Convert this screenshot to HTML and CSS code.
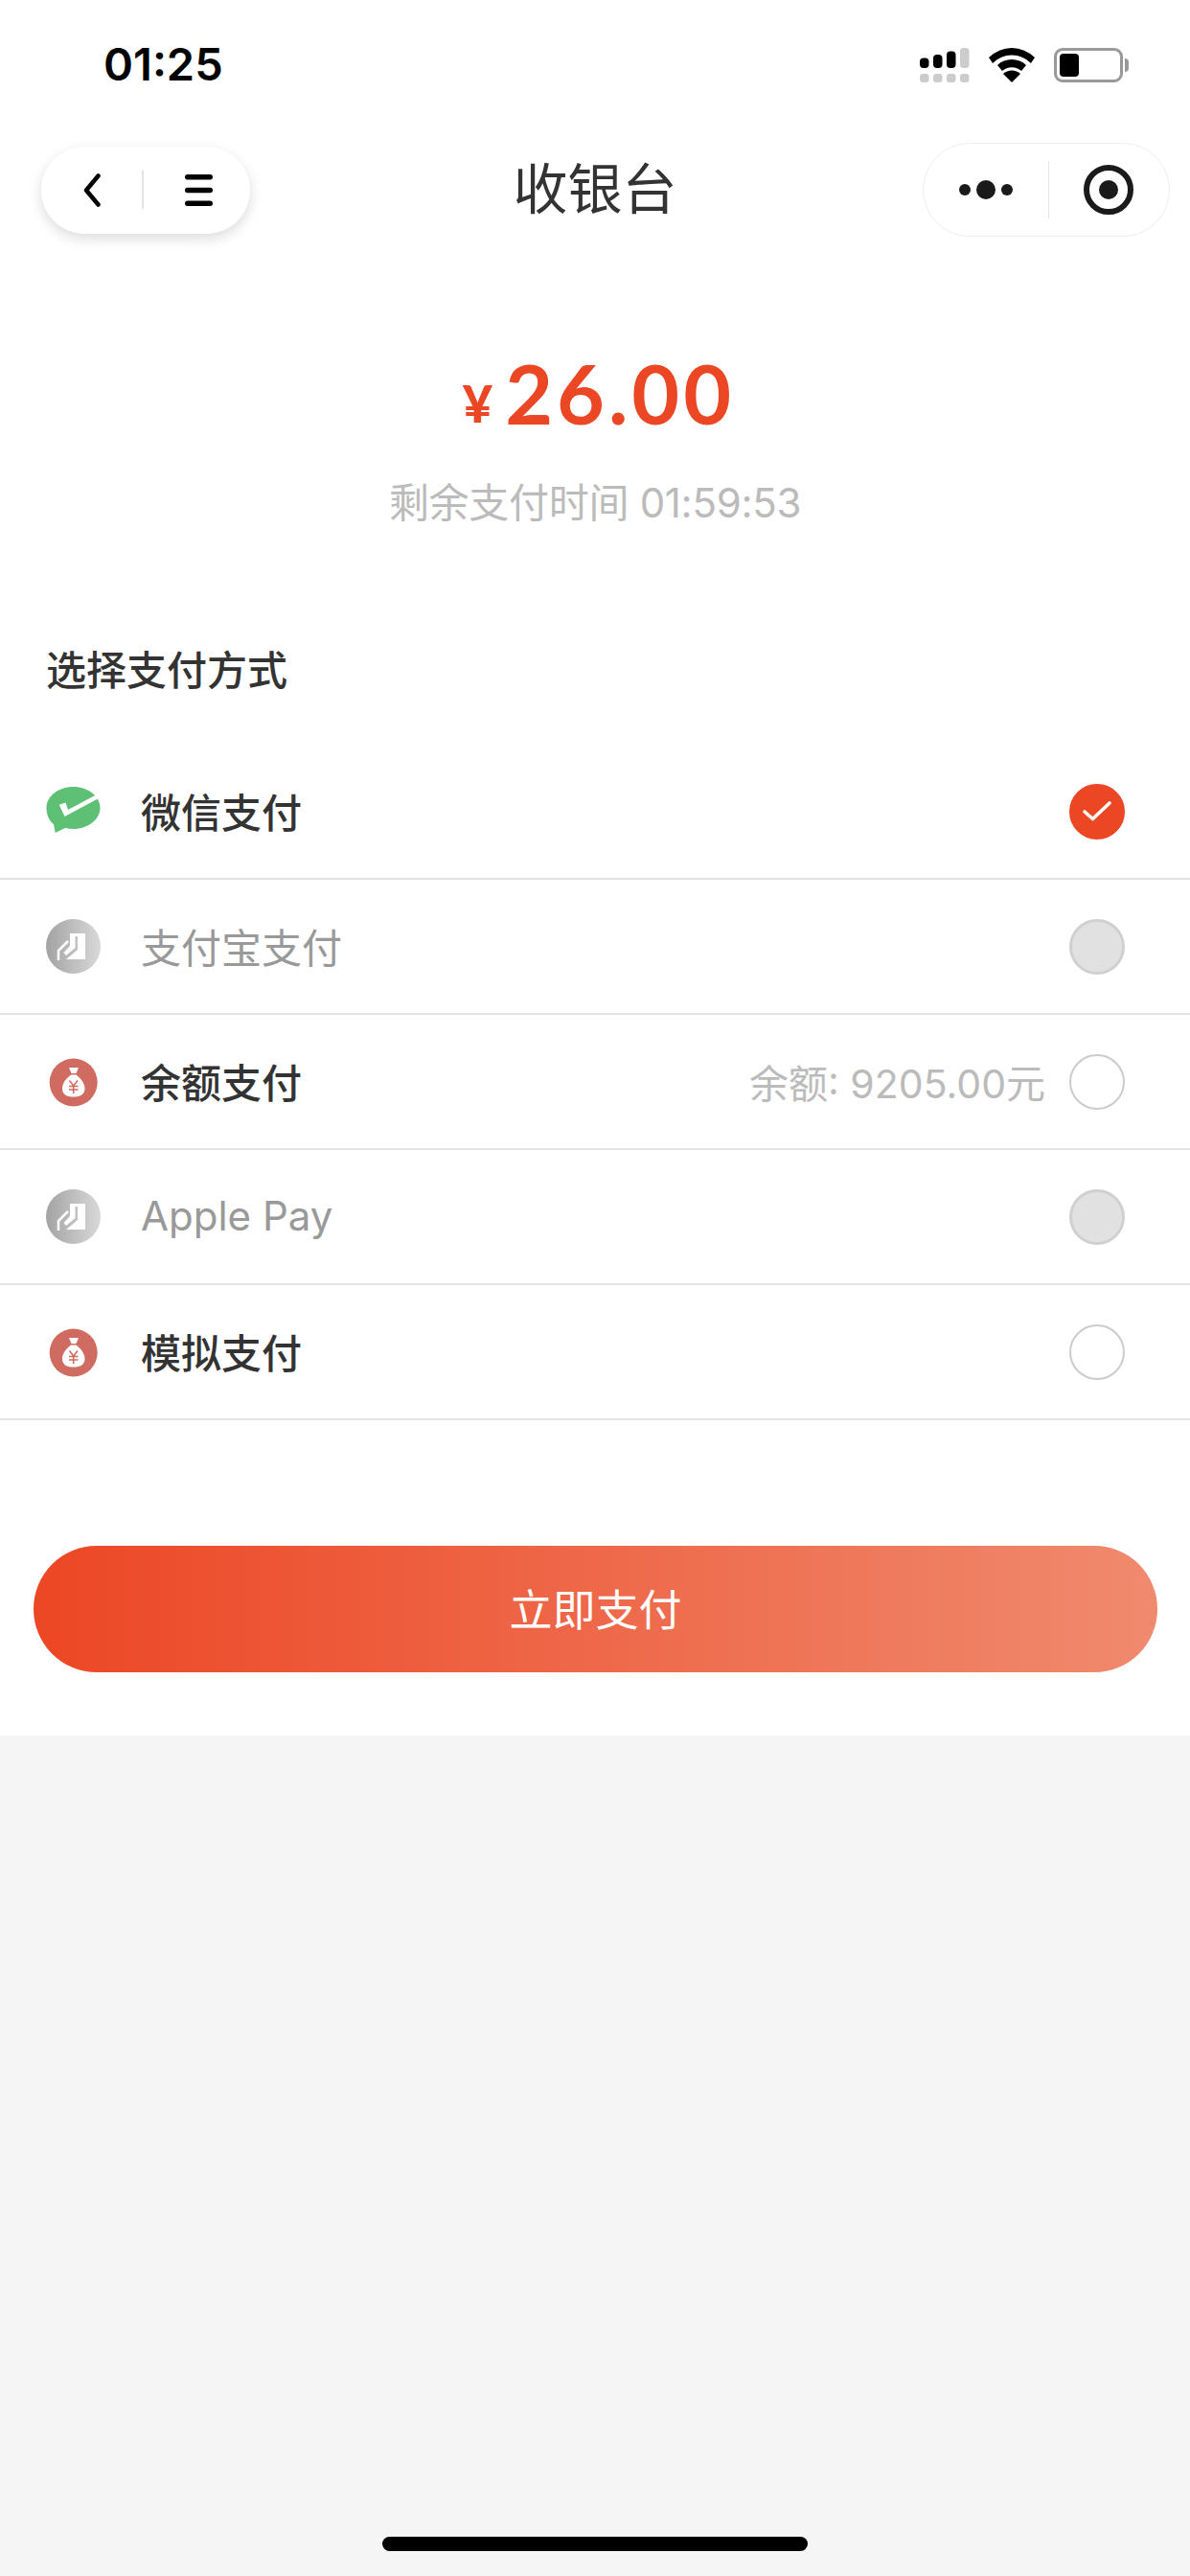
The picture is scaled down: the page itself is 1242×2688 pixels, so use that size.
FILE: index.html
```html
<!DOCTYPE html>
<html lang="zh-CN">
<head>
  <meta charset="UTF-8">
  <meta name="viewport" content="width=device-width, initial-scale=1.0">
  <title>收银台</title>
  <link rel="stylesheet" href="styles.css">
</head>
<body>
  <div class="sheet">
    <div class="status-bar">
      <span class="status-time">01:25</span>
      <div class="status-icons">
        <svg width="52" height="36" viewBox="0 0 52 36">
          <rect x="0" y="10.500" width="9.500" height="10.500" rx="4" fill="#000"/>
          <rect x="14" y="7" width="9.500" height="14" rx="4" fill="#000"/>
          <rect x="28" y="3.500" width="9.500" height="17.500" rx="4" fill="#000"/>
          <rect x="42" y="0" width="9.500" height="21" rx="3.500" fill="#ccc"/>
          <rect x="0" y="27" width="9.500" height="9" rx="3" fill="#ccc"/>
          <rect x="14" y="27" width="9.500" height="9" rx="3" fill="#ccc"/>
          <rect x="28" y="27" width="9.500" height="9" rx="3" fill="#ccc"/>
          <rect x="42" y="27" width="9.500" height="9" rx="3" fill="#ccc"/>
        </svg>
        <svg width="48" height="36" viewBox="0 0 48 36">
          <path d="M0 10 A34 34 0 0 1 48 10 L44 16 A28 28 0 0 0 4 16 Z" fill="#000"/>
          <path d="M9 18 A22 22 0 0 1 39 18 L34 24 A15 15 0 0 0 14 24 Z" fill="#000"/>
          <path d="M24 36 L15 27 A13 13 0 0 1 33 27 Z" fill="#000"/>
        </svg>
        <div class="battery">
          <div class="battery-body"><div class="battery-level"></div></div>
          <div class="battery-tip"></div>
        </div>
      </div>
    </div>

    <div class="nav-bar">
      <div class="nav-pill">
        <svg width="18" height="35" viewBox="0 0 18 35" fill="none" stroke="#000" stroke-width="4.500" stroke-linecap="round" stroke-linejoin="round">
          <path d="M15.500 2.500 L3 17.500 L15.500 32.500"/>
        </svg>
        <span class="pill-line"></span>
        <svg width="29" height="33" viewBox="0 0 29 33" fill="#000">
          <rect y="0" width="29" height="5.500" rx="2.700"/>
          <rect y="13.700" width="29" height="5.500" rx="2.700"/>
          <rect y="27.500" width="29" height="5.500" rx="2.700"/>
        </svg>
      </div>
      <div class="nav-title">收银台</div>
      <div class="capsule">
        <svg width="56" height="24" viewBox="0 0 56 24" fill="#1a1a1a">
          <circle cx="6" cy="12" r="6"/>
          <circle cx="28" cy="12" r="10"/>
          <circle cx="50" cy="12" r="6"/>
        </svg>
        <span class="capsule-line"></span>
        <svg width="52" height="52" viewBox="0 0 52 52">
          <circle cx="26" cy="26" r="23" fill="none" stroke="#1a1a1a" stroke-width="6"/>
          <circle cx="26" cy="26" r="10" fill="#1a1a1a"/>
        </svg>
      </div>
    </div>

    <section class="amount-box">
      <div class="amount"><span class="amount-unit">¥</span><span class="amount-num">26.00</span></div>
      <div class="amount-time">剩余支付时间 01:59:53</div>
    </section>

    <h2 class="pay-title">选择支付方式</h2>

    <ul class="pay-list">
      <li class="pay-item">
        <svg class="pay-icon" viewBox="0 0 57 57">
          <path d="M28.500 3 C44 3 56.500 12.800 56.500 25 C56.500 37 44 47 28.500 47 C25.500 47 22.800 46.600 20 46 L9.700 51 L8 42 C3 38 0.500 32 0.500 25 C0.500 12.800 13 3 28.500 3 Z" fill="#5dc074"/>
          <path d="M13.700 21.700 L20.500 19.500 L23 27 L52 11.500 L55 15 L19.500 34 Z" fill="#fff"/>
        </svg>
        <span class="pay-name">微信支付</span>
        <span class="radio radio-on">
          <svg width="32" height="24" viewBox="0 0 32 24" fill="none" stroke="#fff" stroke-width="3.600" stroke-linecap="round" stroke-linejoin="round">
            <path d="M3 12 L11.500 19.500 L29 3"/>
          </svg>
        </span>
      </li>
      <li class="pay-item is-disabled">
        <svg class="pay-icon" viewBox="0 0 57 57">
          <defs>
            <linearGradient id="greyFill" x1="0" y1="0" x2="1" y2="0">
              <stop offset="0" stop-color="#a3a3a3"/>
              <stop offset="1" stop-color="#d9d9d9"/>
            </linearGradient>
          </defs>
          <circle cx="28.500" cy="28.500" r="28.500" fill="url(#greyFill)"/>
          <path d="M25 15 H41 V42 H21 L33 32 V18 H30.500 V30 L21 38 L18.500 35 L25 28 Z" fill="#fff"/>
          <path d="M13 43 V33 L23 23" fill="none" stroke="#fff" stroke-width="2.500"/>
        </svg>
        <span class="pay-name">支付宝支付</span>
        <span class="radio radio-off"></span>
      </li>
      <li class="pay-item">
        <svg class="pay-icon" viewBox="0 0 57 57">
          <circle cx="28.700" cy="29.500" r="25" fill="#cf6b60"/>
          <path d="M24 14 H34 L31.500 20 H26.500 Z M26 21.500 H31.500 C36 25 40.500 30 40.500 36 C40.500 42 36 44.500 28.700 44.500 C21.500 44.500 17 42 17 36 C17 30 21.500 25 26 21.500 Z" fill="#fff"/>
          <path d="M24.500 27.500 L28.700 33 L33 27.500 M24 33.500 H33.500 M24 37 H33.500 M28.700 33 V41" fill="none" stroke="#cf6b60" stroke-width="1.600"/>
        </svg>
        <span class="pay-name">余额支付</span>
        <span class="pay-note">余额: 9205.00元</span>
        <span class="radio"></span>
      </li>
      <li class="pay-item is-disabled">
        <svg class="pay-icon" viewBox="0 0 57 57">
          <circle cx="28.500" cy="28.500" r="28.500" fill="url(#greyFill)"/>
          <path d="M25 15 H41 V42 H21 L33 32 V18 H30.500 V30 L21 38 L18.500 35 L25 28 Z" fill="#fff"/>
          <path d="M13 43 V33 L23 23" fill="none" stroke="#fff" stroke-width="2.500"/>
        </svg>
        <span class="pay-name">Apple Pay</span>
        <span class="radio radio-off"></span>
      </li>
      <li class="pay-item">
        <svg class="pay-icon" viewBox="0 0 57 57">
          <circle cx="28.700" cy="29.500" r="25" fill="#cf6b60"/>
          <path d="M24 14 H34 L31.500 20 H26.500 Z M26 21.500 H31.500 C36 25 40.500 30 40.500 36 C40.500 42 36 44.500 28.700 44.500 C21.500 44.500 17 42 17 36 C17 30 21.500 25 26 21.500 Z" fill="#fff"/>
          <path d="M24.500 27.500 L28.700 33 L33 27.500 M24 33.500 H33.500 M24 37 H33.500 M28.700 33 V41" fill="none" stroke="#cf6b60" stroke-width="1.600"/>
        </svg>
        <span class="pay-name">模拟支付</span>
        <span class="radio"></span>
      </li>
    </ul>

    <div class="pay-action">
      <button class="pay-btn" type="button">立即支付</button>
    </div>
  </div>

  <div class="home-bar"></div>
</body>
</html>
```

FILE: styles.css
```css
* {
  box-sizing: border-box;
  margin: 0;
  padding: 0;
}

html,
body {
  height: 100%;
}

body {
  display: flex;
  flex-direction: column;
  background-color: #f5f5f5;
  color: #333;
  font-family: Inter, "Noto Sans CJK SC", sans-serif;
}

.sheet {
  background-color: #fff;
  height: 1811px;
}

/* 状态栏 */
.status-bar {
  height: 149px;
  padding: 48px 64px 0 108px;
  display: flex;
  justify-content: space-between;
  align-items: flex-start;
}

.status-time {
  font-size: 47px;
  line-height: 38px;
  font-weight: 600;
  color: #000;
}

.status-icons {
  display: flex;
  align-items: flex-start;
  gap: 20px;
  padding-top: 2px;
}

.battery {
  display: flex;
  align-items: center;
  height: 36px;
}

.battery-body {
  width: 72px;
  height: 36px;
  padding: 3px;
  border: 3px solid #999;
  border-radius: 9px;
}

.battery-level {
  width: 20px;
  height: 100%;
  background-color: #000;
  border-radius: 4px;
}

.battery-tip {
  width: 4px;
  height: 14px;
  margin-left: 2px;
  background-color: #999;
  border-radius: 0 7px 7px 0;
}

/* 导航栏 */
.nav-bar {
  height: 98px;
  padding: 0 21px 0 43px;
  display: grid;
  grid-template-columns: 1fr auto 1fr;
  align-items: center;
}

.nav-pill {
  justify-self: start;
  width: 218px;
  height: 91px;
  padding: 0 39px 0 44px;
  display: flex;
  align-items: center;
  justify-content: space-between;
  background-color: #fff;
  border-radius: 46px;
  box-shadow: 0 5px 14px rgba(0, 0, 0, 0.14);
}

.pill-line {
  width: 2px;
  height: 40px;
  background-color: #e3e3e3;
}

.nav-title {
  font-size: 57px;
  line-height: 98px;
  color: #333;
  transform: translateX(-11px);
}

.capsule {
  justify-self: end;
  width: 258px;
  height: 98px;
  padding: 0 37px 0 37px;
  display: flex;
  align-items: center;
  justify-content: space-between;
  border: 1px solid #eee;
  border-radius: 49px;
}

.capsule-line {
  width: 1px;
  height: 60px;
  background-color: #e5e5e5;
}

/* 金额 */
.amount-box {
  padding-top: 107px;
  text-align: center;
}

.amount {
  display: flex;
  justify-content: center;
  align-items: baseline;
  gap: 13px;
  height: 112px;
  padding-left: 8px;
  color: #ec4725;
  font-family: Lato, "Noto Sans CJK SC", sans-serif;
  font-weight: 700;
}

.amount-unit {
  font-size: 54px;
  font-weight: 900;
  transform: translateY(-2px);
}

.amount-num {
  font-size: 86px;
  line-height: 112px;
  letter-spacing: 4px;
}

.amount-time {
  margin-top: 29px;
  font-size: 42px;
  line-height: 60px;
  letter-spacing: -0.3px;
  color: #bbb;
}

/* 支付方式 */
.pay-title {
  margin-top: 115px;
  padding-left: 48px;
  font-size: 42px;
  line-height: 60px;
  font-weight: 500;
  color: #333;
}

.pay-list {
  margin-top: 47px;
  list-style: none;
}

.pay-item {
  height: 141px;
  padding: 0 68px 0 48px;
  display: flex;
  align-items: center;
  border-bottom: 2px solid #e3e3e3;
}

.pay-icon {
  width: 57px;
  height: 57px;
  flex-shrink: 0;
  margin-right: 42px;
}

.pay-name {
  padding-bottom: 2px;
  font-size: 42px;
  font-weight: 500;
  color: #333;
}

.is-disabled .pay-name {
  color: #999;
  font-weight: 400;
}

.pay-note {
  margin-left: auto;
  padding-bottom: 2px;
  font-size: 41px;
  color: #bbb;
}

.radio {
  width: 58px;
  height: 58px;
  margin-left: 25px;
  flex-shrink: 0;
  border: 2px solid #ccc;
  border-radius: 50%;
  display: flex;
  align-items: center;
  justify-content: center;
}

.pay-name + .radio {
  margin-left: auto;
}

.radio-on {
  background-color: #ec4725;
  border-color: #ec4725;
}

.radio-off {
  background-color: #e1e1e1;
  border: 3px solid #d0d0d0;
}

/* 按钮 */
.pay-action {
  padding: 131px 34px 0 35px;
}

.pay-btn {
  display: block;
  width: 100%;
  height: 132px;
  padding-bottom: 3px;
  border: none;
  border-radius: 66px;
  background: linear-gradient(90deg, #ec4725, #f08a6e);
  color: #fff;
  font-family: inherit;
  font-size: 45px;
}

.home-bar {
  width: 444px;
  height: 15px;
  margin: auto auto 26px;
  background-color: #000;
  border-radius: 8px;
}
```
